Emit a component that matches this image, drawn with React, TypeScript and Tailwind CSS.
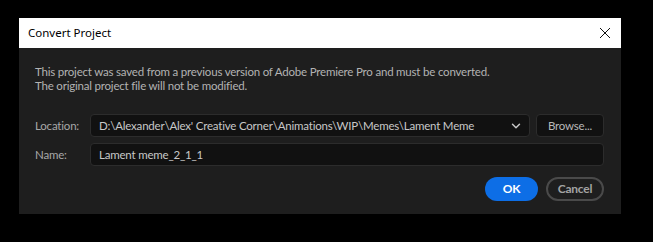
import { ChevronDown } from "lucide-react";

const font = { fontFamily: "Lato, 'Noto Sans', sans-serif" };

const App = () => {
  return (
    <main className="w-[653px] h-[242px] bg-black pt-[18px] pl-[19px]">
      <div className="w-[602px] flex flex-col">
        {/* Title bar */}
        <div className="h-[30px] bg-white flex items-center justify-between pl-[9px] pr-[10px]">
          <span className="text-[11.5px] text-black font-['Noto_Sans',sans-serif]">
            Convert Project
          </span>
          <svg width="12" height="12" viewBox="0 0 12 12" fill="none" stroke="#111" strokeWidth="1">
            <path d="M1 1l10 10M11 1L1 11" />
          </svg>
        </div>

        {/* Body */}
        <div className="h-[166px] bg-[#1e1e1e] pl-[16px] pr-[17px] pt-[17px] flex flex-col tracking-[-0.2px]" style={font}>
          <p className="text-[11.5px] leading-[14px] text-[#b3b3b3]">
            This project was saved from a previous version of Adobe Premiere Pro and must be converted.
            <br />
            The original project file will not be modified.
          </p>

          <div className="mt-[21px] flex items-center h-[23px]">
            <span className="w-[55px] text-[11.5px] text-[#a8a8a8]">Location:</span>
            <div className="w-[440px] h-full bg-[#111111] border border-[#2c2c2c] rounded-[4px] flex items-center justify-between pl-[8px] pr-[6px]">
              <span className="text-[11.5px] text-[#c8c8c8] whitespace-nowrap">
                D:\Alexander\Alex' Creative Corner\Animations\WIP\Memes\Lament Meme
              </span>
              <ChevronDown size={14} strokeWidth={2.5} className="text-[#c8c8c8]" />
            </div>
            <button className="ml-[6px] w-[68px] h-full bg-[#111111] border border-[#2c2c2c] rounded-[4px] text-[11.5px] text-[#b8b8b8]">
              Browse...
            </button>
          </div>

          <div className="mt-[6px] flex items-center h-[23px]">
            <span className="w-[55px] text-[11.5px] text-[#a8a8a8]">Name:</span>
            <div className="flex-1 h-full bg-[#111111] border border-[#2c2c2c] rounded-[4px] flex items-center pl-[8px]">
              <span className="text-[11.5px] text-[#c8c8c8]">Lament meme_2_1_1</span>
            </div>
          </div>

          <div className="mt-[11px] flex justify-end gap-[8px]">
            <button className="w-[53px] h-[24px] rounded-full bg-[#0d6ee6] text-white text-[12px] font-bold">
              OK
            </button>
            <button className="w-[58px] h-[24px] rounded-full border-2 border-[#4a4a4a] text-[#a3a3a3] text-[12px] font-bold">
              Cancel
            </button>
          </div>
        </div>
      </div>
    </main>
  );
};

export default App;
